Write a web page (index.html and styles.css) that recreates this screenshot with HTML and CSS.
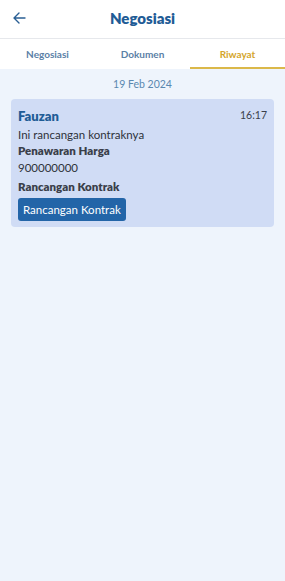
FILE: index.html
```html
<!DOCTYPE html>
<html>
<head>
<meta charset="utf-8">
<link rel="stylesheet" href="styles.css">
</head>
<body>
<div class="app">
  <header class="topbar">
    <span class="back">
      <svg width="13" height="12" viewBox="0 0 13 12"><path d="M12 6H1.5M6 1L1 6l5 5" fill="none" stroke="#2a5f94" stroke-width="1.4" stroke-linecap="round" stroke-linejoin="round"/></svg>
    </span>
    <h1 class="title">Negosiasi</h1>
  </header>
  <nav class="tabs">
    <div class="tab">Negosiasi</div>
    <div class="tab">Dokumen</div>
    <div class="tab active">Riwayat</div>
  </nav>
  <main class="content">
    <div class="date">19 Feb 2024</div>
    <div class="card">
      <div class="card-head">
        <span class="name">Fauzan</span>
        <span class="time">16:17</span>
      </div>
      <div class="text">Ini rancangan kontraknya</div>
      <div class="label">Penawaran Harga</div>
      <div class="text t2">900000000</div>
      <div class="label l2">Rancangan Kontrak</div>
      <button class="btn">Rancangan Kontrak</button>
    </div>
  </main>
</div>
</body>
</html>
```
FILE: styles.css
```css
* { box-sizing: border-box; }
html, body { margin: 0; padding: 0; }
body {
  width: 285px;
  height: 581px;
  font-family: Lato, "Noto Sans", sans-serif;
  background: #eef4fc;
}
.app { display: flex; flex-direction: column; min-height: 581px; }
.topbar {
  height: 39px;
  background: #fff;
  display: flex;
  align-items: center;
  justify-content: center;
  position: relative;
  border-bottom: 1px solid #e6e8ec;
}
.back {
  position: absolute;
  left: 13px;
  top: 12px;
  display: flex;
}
.title {
  margin: 0;
  font-size: 15px;
  font-weight: 800;
  color: #1f5c96;
  padding-bottom: 2px;
}
.tabs {
  display: flex;
  background: #fff;
  height: 30px;
}
.tab {
  flex: 1;
  display: flex;
  align-items: center;
  justify-content: center;
  font-size: 10px;
  font-weight: 700;
  color: #5a80a6;
  border-bottom: 2px solid transparent;
  padding-top: 1px;
}
.tab.active {
  color: #d4a52a;
  border-bottom-color: #dbb84a;
}
.content { flex: 1; padding: 0 10px; }
.date {
  text-align: center;
  font-size: 10.5px;
  color: #5a88b0;
  margin-top: 9px;
  margin-bottom: 9px;
}
.card {
  background: #d0dcf5;
  border-radius: 4px;
  margin: 0 1px;
  padding: 9px 7px 6px 7px;
}
.card-head {
  display: flex;
  justify-content: space-between;
  align-items: flex-start;
}
.name {
  font-size: 13px;
  font-weight: 800;
  color: #1f5c96;
  line-height: 16px;
}
.time {
  font-size: 10.5px;
  color: #3a3f4a;
  line-height: 15px;
}
.text {
  font-size: 11.5px;
  color: #2e323a;
  line-height: 16px;
  margin-top: 3px;
}
.text.t2 { margin-top: 1px; }
.label {
  font-size: 11.5px;
  font-weight: 800;
  color: #3a3f4a;
  line-height: 16px;
  margin-top: 0;
}
.label.l2 { margin-top: 3px; }
.btn {
  margin-top: 3px;
  display: inline-block;
  background: #2365a8;
  color: #fff;
  border: none;
  border-radius: 3px;
  font-family: Lato, "Noto Sans", sans-serif;
  font-size: 11.5px;
  padding: 0 5px;
  height: 23px;
  line-height: 23px;
}
```
